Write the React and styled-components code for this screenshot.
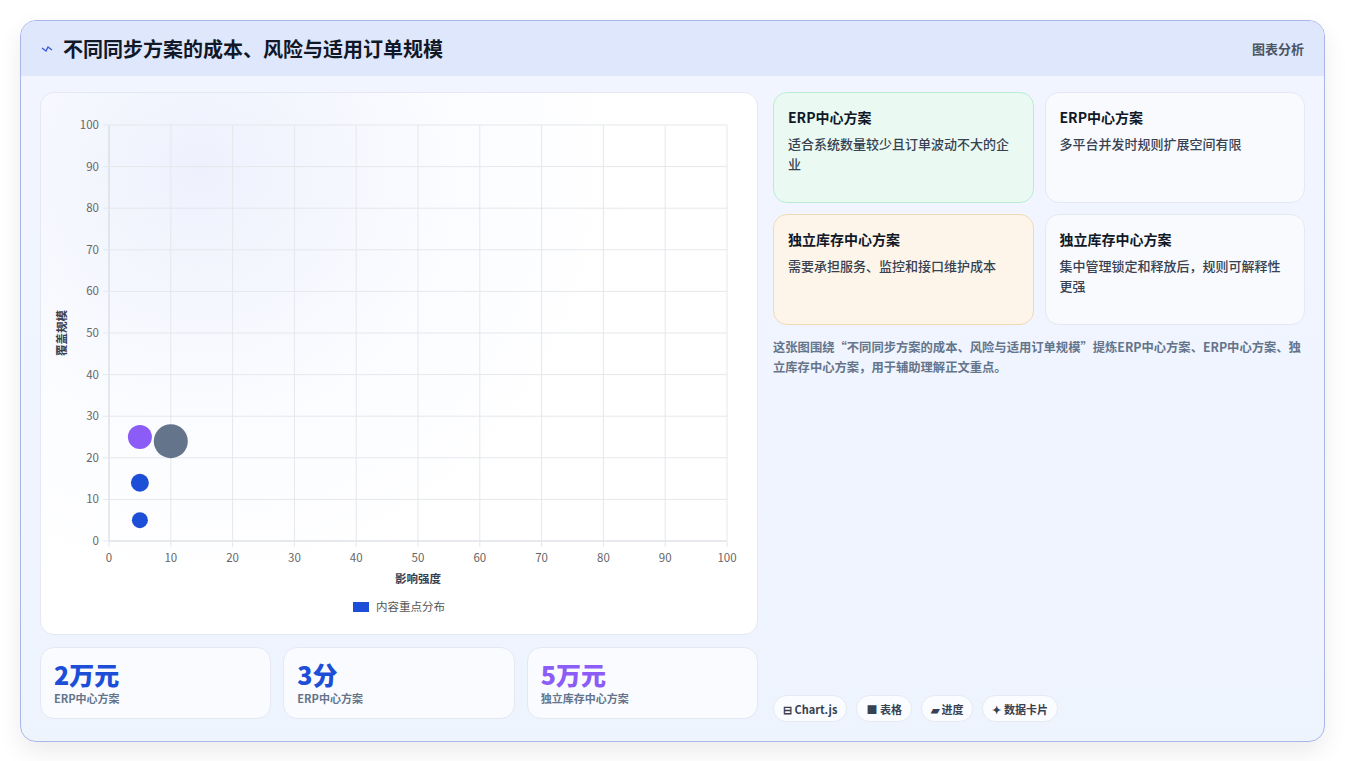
import React from "react";
import styled, { createGlobalStyle } from "styled-components";

const Global = createGlobalStyle`
  html, body { margin: 0; background: #f3f4f6; }
  body { font-family: "Noto Sans CJK SC", "Noto Sans", sans-serif; }
`;

const Page = styled.div`
  width: 1345px;
  height: 761px;
  padding: 20px;
  box-sizing: border-box;
  background: #fff;
`;

const Frame = styled.div`
  height: 720px;
  border: 1px solid #aab6e8;
  border-radius: 16px;
  overflow: hidden;
  background: linear-gradient(180deg, #f2f5ff 0%, #eef4fe 100%);
  box-shadow: 0 10px 24px rgba(0, 0, 0, 0.08);
  display: flex;
  flex-direction: column;
`;

const Header = styled.div`
  height: 55px;
  flex: none;
  background: #dfe7fd;
  display: flex;
  align-items: center;
  justify-content: space-between;
  padding: 0 20px;
`;

const Title = styled.h1`
  margin: 0;
  font-size: 20px;
  font-weight: 700;
  color: #111827;
  display: flex;
  align-items: center;
  gap: 10px;
`;

const Tag = styled.span`
  font-size: 13px;
  color: #4b5563;
  font-weight: 600;
`;

const Body = styled.div`
  flex: 1;
  display: grid;
  grid-template-columns: 718px 1fr;
  gap: 15px;
  padding: 16px 19px 19px 19px;
`;

const Left = styled.div`
  display: flex;
  flex-direction: column;
  gap: 12px;
`;

const ChartCard = styled.div`
  height: 543px;
  box-sizing: border-box;
  border: 1px solid #e3e8f2;
  border-radius: 14px;
  background: radial-gradient(circle at 22% 14%, #eef1fd 0%, #fbfcff 35%, #ffffff 60%);
  position: relative;
`;

const Stats = styled.div`
  display: grid;
  grid-template-columns: repeat(3, 1fr);
  gap: 12px;
`;

const Stat = styled.div`
  height: 72px;
  box-sizing: border-box;
  border: 1px solid #e3e8f2;
  border-radius: 14px;
  background: #f9fbff;
  padding: 10px 13px;
`;

const StatValue = styled.div`
  font-size: 25px;
  font-weight: 800;
  color: ${(p) => p.$color};
  line-height: 32px;
`;

const StatLabel = styled.div`
  font-size: 11px;
  font-weight: 600;
  color: #64748b;
`;

const Right = styled.div`
  display: flex;
  flex-direction: column;
`;

const Cards = styled.div`
  display: grid;
  grid-template-columns: 1fr 1fr;
  grid-auto-rows: 111px;
  gap: 11px;
`;

const Card = styled.div`
  border: 1px solid ${(p) => p.$border};
  background: ${(p) => p.$bg};
  border-radius: 14px;
  padding: 14px 14px;
  box-sizing: border-box;
`;

const CardTitle = styled.div`
  font-size: 14px;
  font-weight: 700;
  color: #111827;
  margin-bottom: 7px;
`;

const CardText = styled.div`
  font-size: 13px;
  line-height: 20px;
  color: #374151;
  font-weight: 500;
`;

const Note = styled.p`
  margin: 12px 0 0;
  font-size: 12.3px;
  line-height: 20px;
  font-weight: 600;
  color: #64748b;
`;

const Chips = styled.div`
  margin-top: auto;
  display: flex;
  gap: 9px;
`;

const Chip = styled.span`
  height: 27px;
  box-sizing: border-box;
  padding: 0 9px;
  border: 1px solid #e5e9f2;
  border-radius: 14px;
  background: #fbfcff;
  display: inline-flex;
  align-items: center;
  gap: 4px;
  font-size: 11px;
  font-weight: 700;
  color: #374151;
`;

const X0 = 68, X1 = 686, YT = 32, YB = 448;
const sx = (v) => X0 + ((X1 - X0) * v) / 100;
const sy = (v) => YB - ((YB - YT) * v) / 100;
const ticks = [0, 10, 20, 30, 40, 50, 60, 70, 80, 90, 100];
const points = [
  { x: 5, y: 5, r: 8, c: "#1d4ed8" },
  { x: 5, y: 14, r: 9, c: "#1d4ed8" },
  { x: 5, y: 25, r: 12, c: "#8b5cf6" },
  { x: 10, y: 24, r: 17, c: "#64748b" },
];

function Chart() {
  return (
    <svg width="716" height="541" style={{ display: "block" }} fontFamily="Noto Sans CJK SC, sans-serif">
      {ticks.map((t) => (
        <g key={t}>
          <line x1={X0} x2={X1} y1={sy(t)} y2={sy(t)} stroke={t === 0 ? "#cfd4dc" : "#e5e7eb"} />
          <line x1={sx(t)} x2={sx(t)} y1={YT} y2={YB} stroke={t === 0 ? "#cfd4dc" : "#e5e7eb"} />
          <line x1={X0 - 6} x2={X0} y1={sy(t)} y2={sy(t)} stroke="#e5e7eb" />
          <line x1={sx(t)} x2={sx(t)} y1={YB} y2={YB + 6} stroke="#e5e7eb" />
          <text x={X0 - 10} y={sy(t) + 4} fontSize="11.5" fill="#666" textAnchor="end">{t}</text>
          <text x={sx(t)} y={YB + 21} fontSize="11.5" fill="#666" textAnchor="middle">{t}</text>
        </g>
      ))}
      <text x={377} y={490} fontSize="11.5" fontWeight="600" fill="#374151" textAnchor="middle">影响强度</text>
      <text transform="translate(25 240) rotate(-90)" fontSize="11.5" fontWeight="600" fill="#374151" textAnchor="middle">覆盖规模</text>
      {points.map((p, i) => (
        <circle key={i} cx={sx(p.x)} cy={sy(p.y)} r={p.r} fill={p.c} />
      ))}
      <rect x={312} y={509} width={16} height={10} fill="#1d4ed8" />
      <text x={335} y={518} fontSize="11.5" fill="#555">内容重点分布</text>
    </svg>
  );
}

export default function App() {
  return (
    <Page>
      <Global />
      <Frame>
        <Header>
          <Title>
            <svg width="12" height="10" viewBox="0 0 12 10">
              <path d="M1 4 L5 7 L7 3 L11 6" stroke="#3b5bdb" strokeWidth="1.4" fill="none" />
            </svg>
            不同同步方案的成本、风险与适用订单规模
          </Title>
          <Tag>图表分析</Tag>
        </Header>
        <Body>
          <Left>
            <ChartCard>
              <Chart />
            </ChartCard>
            <Stats>
              <Stat><StatValue $color="#1d4ed8">2万元</StatValue><StatLabel>ERP中心方案</StatLabel></Stat>
              <Stat><StatValue $color="#1d4ed8">3分</StatValue><StatLabel>ERP中心方案</StatLabel></Stat>
              <Stat><StatValue $color="#8b5cf6">5万元</StatValue><StatLabel>独立库存中心方案</StatLabel></Stat>
            </Stats>
          </Left>
          <Right>
            <Cards>
              <Card $bg="#eafaf2" $border="#b9ebd2">
                <CardTitle>ERP中心方案</CardTitle>
                <CardText>适合系统数量较少且订单波动不大的企业</CardText>
              </Card>
              <Card $bg="#f8fafd" $border="#e3e8f2">
                <CardTitle>ERP中心方案</CardTitle>
                <CardText>多平台并发时规则扩展空间有限</CardText>
              </Card>
              <Card $bg="#fdf5ea" $border="#f1d9b4">
                <CardTitle>独立库存中心方案</CardTitle>
                <CardText>需要承担服务、监控和接口维护成本</CardText>
              </Card>
              <Card $bg="#f8fafd" $border="#e3e8f2">
                <CardTitle>独立库存中心方案</CardTitle>
                <CardText>集中管理锁定和释放后，规则可解释性更强</CardText>
              </Card>
            </Cards>
            <Note>这张图围绕“不同同步方案的成本、风险与适用订单规模”提炼ERP中心方案、ERP中心方案、独立库存中心方案，用于辅助理解正文重点。</Note>
            <Chips>
              <Chip>⊟ Chart.js</Chip>
              <Chip>■ 表格</Chip>
              <Chip>▰ 进度</Chip>
              <Chip>✦ 数据卡片</Chip>
            </Chips>
          </Right>
        </Body>
      </Frame>
    </Page>
  );
}
